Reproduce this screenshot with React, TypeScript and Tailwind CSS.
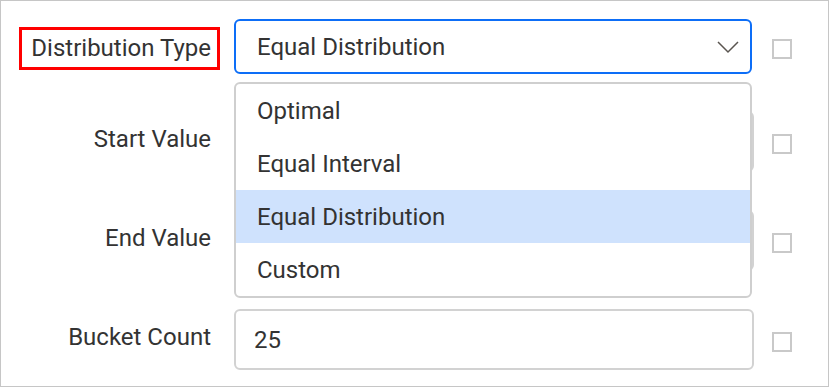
const OPTIONS = ['Optimal', 'Equal Interval', 'Equal Distribution', 'Custom']

function Check() {
  return <span className="block h-[20px] w-[20px] border-2 border-[#c9c9c9] bg-white" />
}

function Chevron() {
  return (
    <svg width="24" height="14" viewBox="0 0 24 14" fill="none" stroke="#5a5550" strokeWidth="1.5">
      <path d="M2 2 L12 12 L22 2" />
    </svg>
  )
}

function Row({ label, value }: { label: string; value?: string }) {
  return (
    <div className="flex h-[61px] items-center">
      <div className="mb-[5px] flex w-[200px] justify-end pr-[9px] text-[24px] text-[#333]">{label}</div>
      <div className="ml-[14px] h-full w-[520px] rounded-[6px] border-2 border-[#d2d2d2] bg-white">
        <div className="flex h-full items-center pl-[18px] text-[24px] text-[#333]">{value}</div>
      </div>
      <div className="ml-[18px] mt-[4px]">
        <Check />
      </div>
    </div>
  )
}

export default function App() {
  return (
    <div
      className="h-[387px] w-[829px] border border-[#c6c6c6] bg-white pl-[19px] pt-[18px]"
      style={{ fontFamily: 'Roboto, "Liberation Sans", sans-serif' }}
    >
      <div className="flex flex-col gap-[37px]">
        {/* distribution type select, open */}
        <div className="flex h-[55px] items-center">
          <div className="mt-[4px] flex w-[200px] justify-end">
            <span className="whitespace-nowrap border-[3px] border-[#f00] py-[4px] pl-[9px] pr-[6px] text-[24px] leading-[29px] text-[#333]">
              Distribution Type
            </span>
          </div>
          <div className="relative ml-[14px] h-full w-[520px]">
            <div className="flex h-full w-[518px] items-center justify-between rounded-[6px] border-2 border-[#0d6ef7] pl-[21px] pr-[10px] text-[24px] text-[#333]">
              <span>Equal Distribution</span>
              <Chevron />
            </div>
            <div className="absolute left-0 top-[63px] z-10 w-[518px] overflow-hidden rounded-[6px] border-2 border-[#cfcfcf] bg-white">
              {OPTIONS.map((o) => (
                <div
                  key={o}
                  className={`flex h-[53px] items-center pl-[21px] text-[24px] text-[#333] ${
                    o === 'Equal Distribution' ? 'bg-[#cfe2fd]' : ''
                  }`}
                >
                  {o}
                </div>
              ))}
            </div>
          </div>
          <div className="ml-[18px] mt-[5px]">
            <Check />
          </div>
        </div>

        <div className="flex flex-col gap-[38px]">
          <Row label="Start Value" />
          <Row label="End Value" />
          <Row label="Bucket Count" value="25" />
        </div>
      </div>
    </div>
  )
}
